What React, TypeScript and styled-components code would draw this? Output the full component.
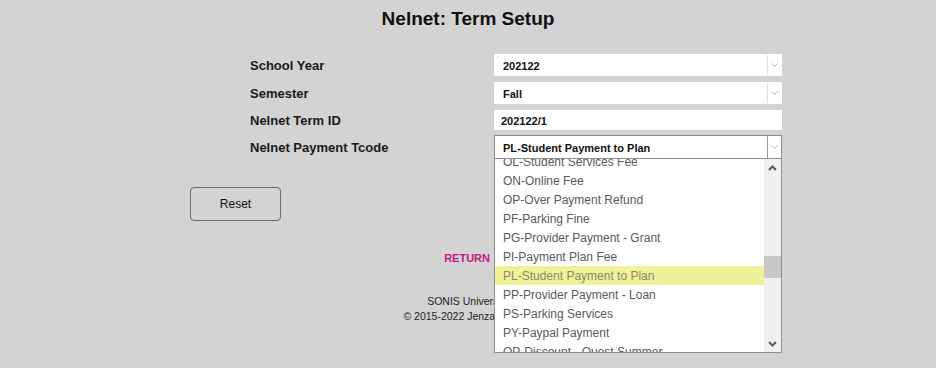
import { useLayoutEffect, useRef } from 'react';
import styled, { createGlobalStyle } from 'styled-components';

const GlobalStyle = createGlobalStyle`
  html, body {
    margin: 0;
    padding: 0;
  }
  body {
    background: #d3d3d3;
    font-family: "Liberation Sans", Arial, sans-serif;
    color: #1a1a1a;
  }
`;

const paymentCodes = [
  'OL-Student Services Fee',
  'ON-Online Fee',
  'OP-Over Payment Refund',
  'PF-Parking Fine',
  'PG-Provider Payment - Grant',
  'PI-Payment Plan Fee',
  'PL-Student Payment to Plan',
  'PP-Provider Payment - Loan',
  'PS-Parking Services',
  'PY-Paypal Payment',
  'QP-Discount - Quest Summer',
  'RF-Refund',
];

const SELECTED = 'PL-Student Payment to Plan';

const SmallChevron = () => (
  <svg width="7" height="4" viewBox="0 0 7 4">
    <polyline points="0.5,0.5 3.5,3.5 6.5,0.5" fill="none" stroke="#b4b4b4" strokeWidth="1" />
  </svg>
);

const ScrollChevron = ({ up }: { up?: boolean }) => (
  <svg width="9" height="6" viewBox="0 0 9 6">
    <polyline
      points={up ? '1,5 4.5,1.5 8,5' : '1,1 4.5,4.5 8,1'}
      fill="none"
      stroke="#5c5c5c"
      strokeWidth="2"
    />
  </svg>
);

const TermSetup = () => {
  const listRef = useRef<HTMLDivElement>(null);

  useLayoutEffect(() => {
    // the open list is scrolled a little past the first item
    if (listRef.current) listRef.current.scrollTop = 7;
  }, []);

  return (
    <Page>
      <Title>Nelnet: Term Setup</Title>

      <Form>
        <Row $height={22}>
          <Label>School Year</Label>
          <SelectBox>
            <Value>202122</Value>
            <ArrowBox><SmallChevron /></ArrowBox>
          </SelectBox>
        </Row>

        <Row $height={22} $gap={6}>
          <Label>Semester</Label>
          <SelectBox>
            <Value>Fall</Value>
            <ArrowBox><SmallChevron /></ArrowBox>
          </SelectBox>
        </Row>

        <Row $height={20} $gap={6}>
          <Label>Nelnet Term ID</Label>
          <SelectBox>
            <Value $indent={6}>202122/1</Value>
          </SelectBox>
        </Row>

        <Row $height={24} $gap={5}>
          <Label>Nelnet Payment Tcode</Label>
          <SelectBox $open>
            <Value>{SELECTED}</Value>
            <ArrowBox $open><SmallChevron /></ArrowBox>

            <Dropdown>
              <Options ref={listRef}>
                {paymentCodes.map((code) => (
                  <Option key={code} $active={code === SELECTED}>{code}</Option>
                ))}
              </Options>
              <Scrollbar>
                <ScrollButton><ScrollChevron up /></ScrollButton>
                <Track>
                  <Thumb $top={80} $size={22} />
                </Track>
                <ScrollButton><ScrollChevron /></ScrollButton>
              </Scrollbar>
            </Dropdown>
          </SelectBox>
        </Row>
      </Form>

      <Actions>
        <ResetButton>Reset</ResetButton>
      </Actions>

      <ReturnRow>
        <ReturnLink>RETURN</ReturnLink>
      </ReturnRow>

      <Footer>
        <FooterLine>SONIS University</FooterLine>
        <FooterLine>© 2015-2022 Jenzabar, Inc.</FooterLine>
      </Footer>
    </Page>
  );
};

const Page = styled.div`
  width: 936px;
  height: 368px;
  overflow: hidden;
`;

const Title = styled.h1`
  margin: 0;
  padding-top: 8px;
  text-align: center;
  font-size: 19px;
  line-height: 22px;
  font-weight: 700;
  color: #111111;
`;

const Form = styled.div`
  display: flex;
  flex-direction: column;
  margin: 24px 0 0 250px;
  width: 532px;
`;

const Row = styled.div<{ $height: number; $gap?: number }>`
  display: grid;
  grid-template-columns: 244px 288px;
  align-items: center;
  height: ${(p) => p.$height}px;
  margin-top: ${(p) => p.$gap ?? 0}px;
`;

const Label = styled.div`
  font-size: 13px;
  line-height: 15px;
  font-weight: 700;
  color: #1a1a1a;
`;

const SelectBox = styled.div<{ $open?: boolean }>`
  position: relative;
  display: flex;
  align-items: center;
  height: 100%;
  box-sizing: border-box;
  background: #ffffff;
  border: 1px solid ${(p) => (p.$open ? '#8e8e8e' : 'transparent')};
`;

const Value = styled.div<{ $indent?: number }>`
  flex: 1;
  padding-left: ${(p) => p.$indent ?? 8}px;
  padding-top: 1px;
  font-size: 11px;
  font-weight: 700;
  color: #111111;
  white-space: nowrap;
`;

const ArrowBox = styled.div<{ $open?: boolean }>`
  align-self: stretch;
  width: 13px;
  display: flex;
  align-items: center;
  justify-content: center;
  border-left: 1px solid ${(p) => (p.$open ? '#9a9a9a' : '#e2e2e2')};
`;

const Dropdown = styled.div`
  position: absolute;
  z-index: 10;
  left: -1px;
  right: -1px;
  top: 100%;
  height: 195px;
  box-sizing: border-box;
  display: flex;
  background: #ffffff;
  border: 1px solid #8e8e8e;
`;

const Options = styled.div`
  flex: 1;
  overflow: hidden;
`;

const Option = styled.div<{ $active?: boolean }>`
  height: 19px;
  line-height: 20px;
  padding-left: 8px;
  font-size: 12px;
  color: ${(p) => (p.$active ? '#8a8a6a' : '#5a5a5a')};
  background: ${(p) => (p.$active ? '#eef39a' : 'transparent')};
  white-space: nowrap;
`;

const Scrollbar = styled.div`
  width: 17px;
  display: flex;
  flex-direction: column;
  background: #f0f0f0;
`;

const ScrollButton = styled.div`
  height: 17px;
  display: flex;
  align-items: center;
  justify-content: center;
`;

const Track = styled.div`
  flex: 1;
`;

const Thumb = styled.div<{ $top: number; $size: number }>`
  margin-top: ${(p) => p.$top}px;
  height: ${(p) => p.$size}px;
  background: #c8c8c8;
`;

const Actions = styled.div`
  margin: 28px 0 0 190px;
`;

const ResetButton = styled.button`
  width: 91px;
  height: 34px;
  box-sizing: border-box;
  padding: 0;
  background: transparent;
  border: 1px solid #6b6b6b;
  border-radius: 4px;
  font-family: "Liberation Sans", Arial, sans-serif;
  font-size: 12px;
  color: #111111;
  cursor: pointer;
`;

const ReturnRow = styled.div`
  display: flex;
  justify-content: flex-end;
  width: 490px;
  margin-top: 31px;
`;

const ReturnLink = styled.a`
  font-size: 11px;
  line-height: 13px;
  font-weight: 700;
  color: #c71585;
  text-decoration: none;
  cursor: pointer;
`;

const Footer = styled.div`
  margin-top: 29px;
  text-align: center;
`;

const FooterLine = styled.div`
  font-size: 10.5px;
  line-height: 15px;
  color: #1e1e1e;
`;

const App = () => (
  <>
    <GlobalStyle />
    <TermSetup />
  </>
);

export default App;
